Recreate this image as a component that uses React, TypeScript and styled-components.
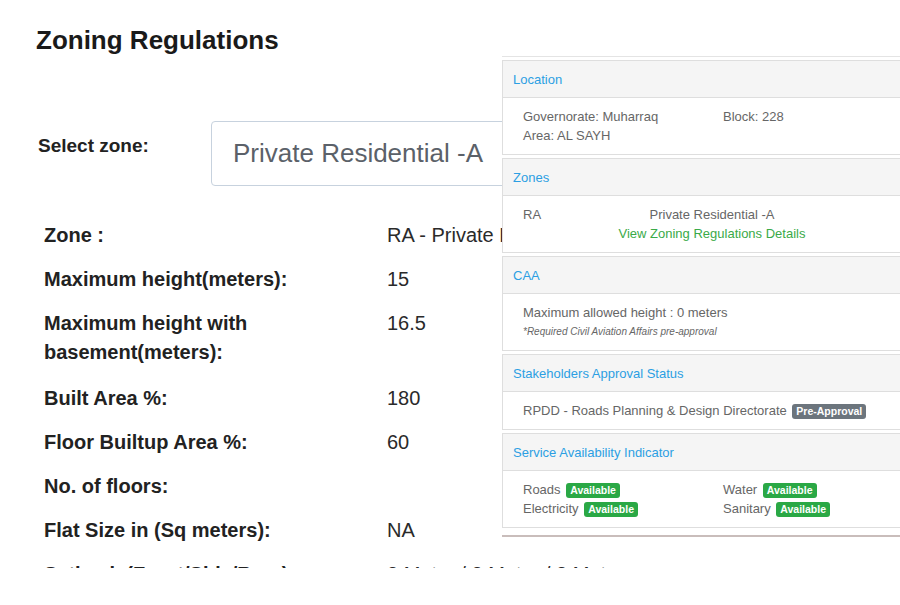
import React from 'react'
import styled, { createGlobalStyle } from 'styled-components';

const GlobalStyle = createGlobalStyle`
    html, body {
        margin: 0;
        padding: 0;
        background: #fff;
    }
    body {
        font-family: "Liberation Sans", Arial, sans-serif;
    }
`

type rowType = {
    label: string;
    value: string;
    wide?: boolean;
}

const rows: rowType[] = [
    { label: "Zone :", value: "RA - Private Residential -A" },
    { label: "Maximum height(meters):", value: "15" },
    { label: "Maximum height with basement(meters):", value: "16.5", wide: true },
    { label: "Built Area %:", value: "180" },
    { label: "Floor Builtup Area %:", value: "60" },
    { label: "No. of floors:", value: "" },
    { label: "Flat Size in (Sq meters):", value: "NA" },
    { label: "Setback (Front/Side/Rear):", value: "3 Meter / 3 Meter / 3 Meter" },
];

const services = [
    { name: "Roads", ok: true },
    { name: "Water", ok: true },
    { name: "Electricity", ok: true },
    { name: "Sanitary", ok: true },
];

const App = () => {
    return (<>
        <GlobalStyle />
        <Page>
            <Main>
                <Title>Zoning Regulations</Title>
                <SelectRow>
                    <SelectLabel>Select zone:</SelectLabel>
                    <SelectBox>Private Residential -A</SelectBox>
                </SelectRow>
                <Table>
                    {rows.map((r) => (
                        <Row key={r.label} wide={r.wide}>
                            <Label>{r.label}</Label>
                            <Value>{r.value}</Value>
                        </Row>
                    ))}
                </Table>
            </Main>

            <InfoPanel>
                <Card>
                    <CardHead>Location</CardHead>
                    <CardBody>
                        <TwoCols>
                            <span>Governorate: Muharraq</span>
                            <span>Block: 228</span>
                            <span>Area: AL SAYH</span>
                        </TwoCols>
                    </CardBody>
                </Card>
                <Card>
                    <CardHead>Zones</CardHead>
                    <CardBody>
                        <ZoneLine>
                            <span>RA</span>
                            <span>Private Residential -A</span>
                            <span />
                        </ZoneLine>
                        <DetailsLink>View Zoning Regulations Details</DetailsLink>
                    </CardBody>
                </Card>
                <Card>
                    <CardHead>CAA</CardHead>
                    <CardBody>
                        <div>Maximum allowed height : 0 meters</div>
                        <Note>*Required Civil Aviation Affairs pre-approval</Note>
                    </CardBody>
                </Card>
                <Card>
                    <CardHead>Stakeholders Approval Status</CardHead>
                    <CardBody>
                        RPDD - Roads Planning &amp; Design Directorate <Badge tone="gray">Pre-Approval</Badge>
                    </CardBody>
                </Card>
                <Card>
                    <CardHead>Service Availability Indicator</CardHead>
                    <CardBody>
                        <TwoCols>
                            {services.map((s) => (
                                <span key={s.name}>
                                    {s.name} <Badge tone="green">Available</Badge>
                                </span>
                            ))}
                        </TwoCols>
                    </CardBody>
                </Card>
            </InfoPanel>
        </Page>
    </>
    )
}

export default App;


const Page = styled.div`
    position: relative;
    width: 900px;
    height: 605px;
    overflow: hidden;
    background: #fff;
`

const Main = styled.div`
    height: 568px;
    overflow: hidden;
    padding-left: 36px;
    box-sizing: border-box;
`

const Title = styled.h1`
    margin: 0;
    padding-top: 25px;
    font-size: 26px;
    line-height: 30px;
    font-weight: 700;
    color: #1a1a1a;
`

const SelectRow = styled.div`
    display: flex;
    align-items: center;
    margin-top: 66px;
`

const SelectLabel = styled.label`
    width: 173px;
    padding-left: 2px;
    padding-bottom: 16px;
    font-size: 19px;
    font-weight: 700;
    color: #222;
`

const SelectBox = styled.div`
    width: 560px;
    height: 65px;
    box-sizing: border-box;
    border: 1px solid #c7d2de;
    border-radius: 4px;
    padding-left: 21px;
    display: flex;
    align-items: center;
    font-size: 26px;
    color: #5b6169;
    flex-shrink: 0;
`

const Table = styled.div`
    margin-top: 27px;
    padding-left: 8px;
`

type rowProps = {
    wide?: boolean;
}

const Row = styled.div<rowProps>`
    display: grid;
    grid-template-columns: 343px 1fr;
    padding: 7.5px 0 ${({ wide }) => wide ? "9.5px" : "7.5px"};
    line-height: 29px;
    font-size: 20px;
`

const Label = styled.div`
    font-weight: 700;
    color: #222;
    padding-right: 40px;
`

const Value = styled.div`
    color: #2a2a2a;
    white-space: nowrap;
`

const InfoPanel = styled.div`
    position: absolute;
    left: 502px;
    top: 56px;
    width: 420px;
    background: #fff;
    border-top: 1px solid #e4e4e4;
    border-bottom: 2px solid #c9bdbb;
    padding: 3px 0 7px;
    font-size: 13px;
    color: #666;
`

const Card = styled.div`
    border: 1px solid #dedede;
    background: #fff;
    & + & {
        margin-top: 3px;
    }
`

const CardHead = styled.div`
    height: 36px;
    display: flex;
    align-items: center;
    padding: 0 10px;
    background: #f5f5f5;
    border-bottom: 1px solid #dedede;
    color: #2c9fe3;
    font-size: 13px;
`

const CardBody = styled.div`
    padding: 9px 20px 9px;
    line-height: 19px;
    color: #666;
`

const TwoCols = styled.div`
    display: grid;
    grid-template-columns: 200px 1fr;
    line-height: 19px;
`

const ZoneLine = styled.div`
    display: grid;
    grid-template-columns: 1fr auto 1fr;
`

const DetailsLink = styled.div`
    text-align: center;
    color: #3aaa48;
`

const Note = styled.div`
    font-size: 10px;
    font-style: italic;
    color: #666;
`

type badgeProps = {
    tone: "green" | "gray";
}

const Badge = styled.span<badgeProps>`
    display: inline-block;
    padding: 0 4px;
    height: 15px;
    line-height: 15px;
    border-radius: 3px;
    font-size: 10.5px;
    font-weight: 700;
    color: #fff;
    vertical-align: 0px;
    margin-left: 2px;
    background: ${({ tone }) => tone === "green" ? "#2aa845" : "#6c757d"};
`
